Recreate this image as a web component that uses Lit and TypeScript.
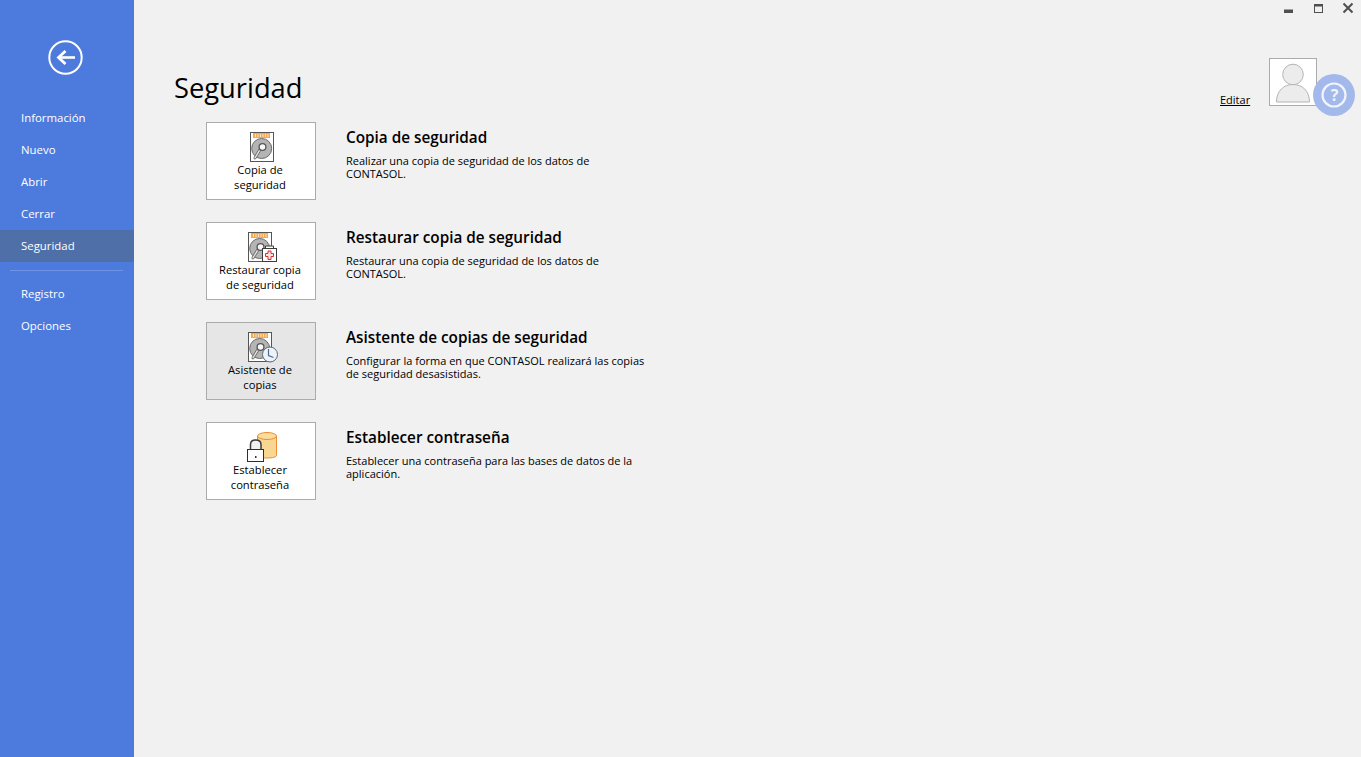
import { LitElement, html, css, svg } from "lit";
import { customElement } from "lit/decorators.js";

const disk = () => svg`
  <rect x="1.5" y="0.5" width="23" height="29" fill="#fff" stroke="#555"/>
  <rect x="4" y="1" width="17" height="5" fill="#f5a94e"/>
  <path d="M6.500 2v3M9 2v3M11.500 2v3M14 2v3M16.500 2v3M19 2v3" stroke="#fde3c2" stroke-width="1"/>
  <circle cx="12.700" cy="16.500" r="10" fill="#b4b4b4" stroke="#6a6a6a"/>
  <circle cx="13.500" cy="15" r="3.400" fill="#f8f8f8" stroke="#555" stroke-width="1.300"/>
  <path d="M10 17 L5 25.500 Q4.500 27.500 6.500 27 L11.500 19Z" fill="#e2e2e2" stroke="#555" stroke-width="0.800"/>`;

const ICONS = [
  svg`<svg width="26" height="30" viewBox="0 0 26 30">${disk()}</svg>`,
  svg`<svg width="30" height="30" viewBox="0 0 30 30">${disk()}
    <rect x="15.500" y="16.500" width="14" height="13" fill="#fff" stroke="#3c3c3c"/>
    <path d="M18.500 16v-2h8v2" fill="#fff" stroke="#3c3c3c"/>
    <path d="M21 19h3v2.500h2.500v3h-2.500v3h-3v-3h-2.500v-3h2.500z" fill="#fbe0e0" stroke="#e02b2b"/>
  </svg>`,
  svg`<svg width="31" height="31" viewBox="0 0 31 31">${disk()}
    <circle cx="23" cy="22.500" r="7.500" fill="#eef3f8" stroke="#5a6a78"/>
    <path d="M21.500 17v6.500l5 2" fill="none" stroke="#4a6a90" stroke-width="1.200"/>
  </svg>`,
  svg`<svg width="32" height="30" viewBox="0 0 32 30">
    <path d="M11.500 4v19c0 2 3.500 3 9.500 3s9.500-1 9.500-3v-19z" fill="#f8d792" stroke="#ee8b33"/>
    <ellipse cx="21" cy="4" rx="9.500" ry="3.500" fill="#f9dc9e" stroke="#ee8b33"/>
    <path d="M4.500 17v-4.500c0-3.500 2.500-4.500 5-4.500s5.500 1 5.500 4.500v4.500" fill="#f0f0f0" stroke="#3c3c3c" stroke-width="1.500"/>
    <rect x="1.500" y="17.500" width="16" height="12" fill="#fff" stroke="#2e2e2e"/>
    <rect x="9" y="24" width="1.500" height="2" fill="#333"/>
  </svg>`,
];

const ROWS = [
  { label: ["Copia de", "seguridad"], title: "Copia de seguridad", desc: ["Realizar una copia de seguridad de los datos de", "CONTASOL."] },
  { label: ["Restaurar copia", "de seguridad"], title: "Restaurar copia de seguridad", desc: ["Restaurar una copia de seguridad de los datos de", "CONTASOL."] },
  { label: ["Asistente de", "copias"], title: "Asistente de copias de seguridad", desc: ["Configurar la forma en que CONTASOL realizará las copias", "de seguridad desasistidas."], hover: true },
  { label: ["Establecer", "contraseña"], title: "Establecer contraseña", desc: ["Establecer una contraseña para las bases de datos de la", "aplicación."] },
];

@customElement("app-root")
export class AppRoot extends LitElement {
  static styles = css`
    :host {
      display: flex;
      width: 1361px;
      height: 757px;
      overflow: hidden;
      position: relative;
      background: #f1f1f1;
      font-family: "Open Sans", "Noto Sans", sans-serif;
      color: #000;
    }
    .side {
      width: 134px;
      flex: none;
      background: #4d7bdd;
      display: flex;
      flex-direction: column;
      padding-top: 40px;
      box-sizing: border-box;
    }
    .back { margin: 0 0 27px 48px; width: 35px; height: 35px; display: block; }
    .back svg { display: block; }
    .navitem {
      height: 32px;
      line-height: 32px;
      padding-left: 21px;
      font-size: 11.400px;
      color: #fff;
    }
    .navitem.sel { background: #4f6fa9; }
    .sep { height: 1px; margin: 8px 11px 7px 10px; background: #6f94e6; }
    .main { flex: 1; padding: 68px 0 0 40px; box-sizing: border-box; }
    h1 { margin: 0 0 15px; font-size: 27.300px; line-height: 39px; font-weight: 400; height: 39px; }
    .rows { display: flex; flex-direction: column; gap: 22px; margin-left: 32px; }
    .row { display: flex; gap: 30px; height: 78px; }
    .btn {
      width: 110px;
      height: 78px;
      box-sizing: border-box;
      background: #fff;
      border: 1px solid #ababab;
      display: flex;
      flex-direction: column;
      align-items: center;
      font-size: 11.200px;
      line-height: 15px;
      padding: 9px 2px 0 0;
    }
    .btn.hover { background: #e6e6e6; }
    .ico { height: 30px; padding-left: 4px; display: flex; align-items: flex-start; justify-content: center; }
    .ico svg { display: block; flex: none; }
    .lbl { text-align: center; white-space: nowrap; }
    .info { padding-top: 5px; }
    h2 { margin: 0 0 7px; font-size: 15.300px; line-height: 20px; font-weight: 600; white-space: nowrap; }
    p { margin: 0; font-size: 11px; line-height: 13px; white-space: nowrap; }
    .win { position: absolute; top: 0; right: 0; width: 90px; height: 20px; }
    .win svg { position: absolute; left: 0; top: 0; }
    .edit {
      position: absolute;
      left: 1220px;
      top: 92px;
      font-size: 11px;
      line-height: 15px;
      text-decoration: underline;
    }
    .avatar {
      position: absolute;
      left: 1269px;
      top: 58px;
      width: 48px;
      height: 48px;
      box-sizing: border-box;
      background: #fff;
      border: 1px solid #ababab;
    }
    .avatar svg { display: block; }
    .help { position: absolute; left: 1313px; top: 74px; width: 43px; height: 43px; }
    .help svg { display: block; }
    .q {
      position: absolute;
      left: 0;
      right: 0;
      top: 9px;
      text-align: center;
      font-size: 16px;
      line-height: 24px;
      font-weight: 700;
      color: #f0f4fc;
    }
  `;

  render() {
    return html`
      <aside class="side">
        <div class="back">
          <svg width="35" height="35" viewBox="0 0 35 35">
            <circle cx="17.500" cy="17.500" r="16.200" fill="none" stroke="#fff" stroke-width="2"/>
            <path d="M27 17.500H12" stroke="#fff" stroke-width="2.600"/>
            <path d="M17.500 11L10.500 17.500L17.500 24" fill="none" stroke="#fff" stroke-width="2.800"/>
          </svg>
        </div>
        <div class="navitem">Información</div>
        <div class="navitem">Nuevo</div>
        <div class="navitem">Abrir</div>
        <div class="navitem">Cerrar</div>
        <div class="navitem sel">Seguridad</div>
        <div class="sep"></div>
        <div class="navitem">Registro</div>
        <div class="navitem">Opciones</div>
      </aside>
      <main class="main">
        <h1>Seguridad</h1>
        <div class="rows">
          ${ROWS.map((r, i) => html`
            <section class="row">
              <div class="btn ${r.hover ? "hover" : ""}">
                <div class="ico">${ICONS[i]}</div>
                <div class="lbl">${r.label[0]}<br />${r.label[1]}</div>
              </div>
              <div class="info">
                <h2>${r.title}</h2>
                <p>${r.desc[0]}<br />${r.desc[1]}</p>
              </div>
            </section>
          `)}
        </div>
      </main>
      <div class="win">
        <svg width="90" height="20" viewBox="0 0 90 20">
          <rect x="13" y="9.500" width="9" height="3.500" fill="#4f4f4f"/>
          <rect x="43.500" y="4.500" width="8" height="8" fill="none" stroke="#4f4f4f"/>
          <rect x="43" y="4" width="9" height="2.500" fill="#4f4f4f"/>
          <path d="M72.500 3.500L81.500 12.500M81.500 3.500L72.500 12.500" stroke="#4f4f4f" stroke-width="2"/>
        </svg>
      </div>
      <a class="edit">Editar</a>
      <div class="avatar">
        <svg width="46" height="46" viewBox="0 0 46 46">
          <circle cx="23" cy="15.500" r="10.300" fill="#ececec" stroke="#b4b4b4"/>
          <path d="M6.500 43c0-11 7-17.500 16.500-17.500S39.500 32 39.500 43z" fill="#ececec" stroke="#b4b4b4"/>
        </svg>
      </div>
      <div class="help">
        <svg width="43" height="43" viewBox="0 0 43 43">
          <circle cx="21" cy="21" r="21" fill="#a3b9eb"/>
          <circle cx="21" cy="21" r="11.500" fill="none" stroke="#f0f4fc" stroke-width="2.200"/>
        </svg>
        <div class="q">?</div>
      </div>
    `;
  }
}
